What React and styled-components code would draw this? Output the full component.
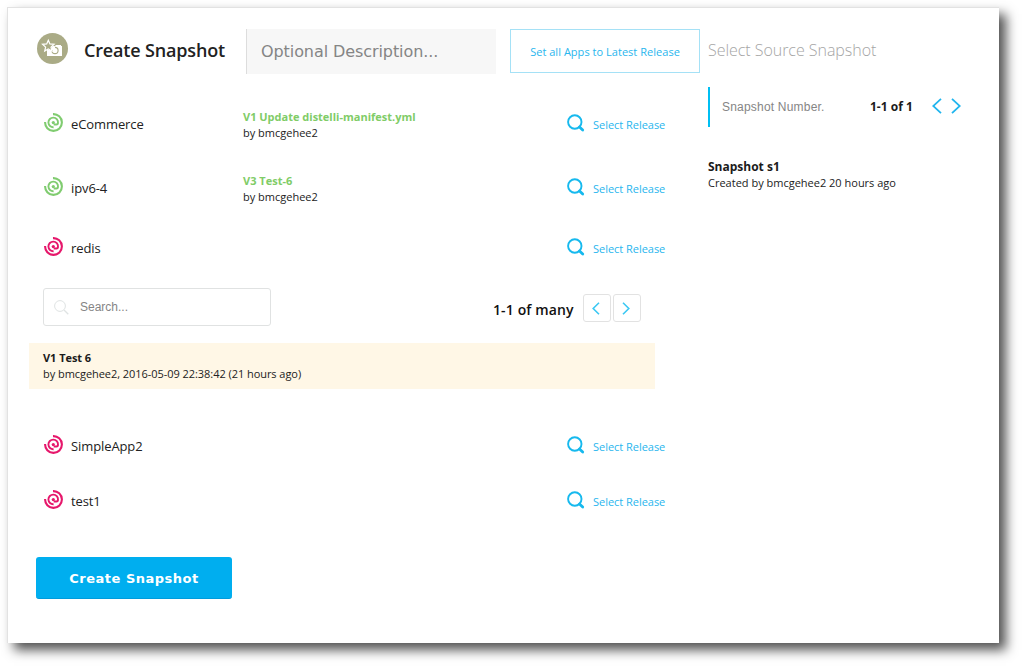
import React from 'react';
import styled, { createGlobalStyle } from 'styled-components';

const GlobalStyle = createGlobalStyle`
  * { box-sizing: border-box; }
  body {
    display: flow-root;
    min-height: 100vh;
    margin: 0;
    background: #fff;
    color: #222;
    font-family: 'Open Sans', 'Noto Sans', sans-serif;
    font-size: 11px;
    overflow: hidden;
  }
  button, input { font: inherit; margin: 0; outline: 0; }
  button { cursor: pointer; padding: 0; }
  svg { display: block; flex: none; }
`;

const Panel = styled.main`
  display: grid;
  grid-template-columns: 700px 1fr;
  width: 992px;
  height: 636px;
  margin: 7px;
  border: solid #e2e2e2;
  border-width: 1px 0 0 1px;
  background: #fff;
  box-shadow: 7px 7px 11px rgba(0, 0, 0, 0.68);
`;

const Main = styled.section`
  padding-top: 21px;
`;

const Header = styled.header`
  display: flex;
  align-items: center;
  height: 44px;
  padding-left: 29px;
`;

const BadgeIcon = styled.svg`
  margin-top: -5px;
`;

const Title = styled.h1`
  width: 162px;
  margin: -3px 0 0 16px;
  font-size: 18px;
  line-height: 26px;
  font-weight: 600;
  letter-spacing: -0.16px;
  white-space: nowrap;
`;

const Description = styled.input`
  width: 250px;
  height: 45px;
  padding: 0 14px;
  border: 0;
  border-left: 1px solid #ddd;
  background: #f7f7f7;
  font-family: 'DejaVu Sans', sans-serif;
  font-size: 16px;
  letter-spacing: -0.08px;
  &::placeholder { color: #858585; opacity: 1; }
`;

const OutlineButton = styled.button`
  width: 190px;
  height: 44px;
  margin-left: 14px;
  border: 1px solid #a5e1f6;
  background: #fff;
  color: #29b6ee;
  font-size: 11px;
  letter-spacing: 0.03px;
`;

const AppList = styled.div`
  padding-top: 19px;
`;

const AppRow = styled.div`
  display: grid;
  grid-template-columns: 27px 172px 324px 1fr;
  align-items: center;
  height: ${(p) => (p.$tall ? 64 : 55)}px;
  padding: 0 0 ${(p) => (p.$tall ? 2 : 1)}px 36px;
`;

const AppName = styled.span`
  padding-top: 2px;
  font-size: 13px;
  line-height: 18px;
  letter-spacing: -0.1px;
`;

const Release = styled.div`
  padding-top: 4px;
  line-height: 16px;
`;

const ReleaseName = styled.div`
  color: #80cc67;
  font-weight: 700;
`;

const SelectLink = styled.a`
  display: flex;
  align-items: center;
  gap: 8px;
  color: #29b6ee;
  line-height: 16px;
  letter-spacing: -0.03px;
`;

const LinkText = styled.span`
  padding-top: 4px;
`;

const Picker = styled.div`
  height: 143px;
  padding: 13px 0 0 21px;
`;

const PickerBar = styled.div`
  display: flex;
  align-items: flex-start;
  height: 55px;
  padding-left: 14px;
`;

const SearchBox = styled.label`
  display: flex;
  align-items: center;
  gap: 11px;
  width: 228px;
  height: 38px;
  padding-left: 10px;
  border: 1px solid #e0e2e2;
  border-radius: 3px;
`;

const PlainInput = styled.input`
  min-width: 0;
  width: ${(p) => p.$width}px;
  padding: 0;
  border: 0;
  background: transparent;
  font-family: 'Liberation Sans', Arial, sans-serif;
  font-size: 12px;
  letter-spacing: ${(p) => p.$spacing || 0}px;
  &::placeholder { color: #858585; opacity: 1; }
`;

const ManyCount = styled.span`
  width: 90px;
  margin: 12px 0 0 222px;
  color: #111;
  font-size: 14px;
  font-weight: 600;
  line-height: 20px;
  letter-spacing: 0.12px;
`;

const PageButton = styled.button`
  display: flex;
  align-items: center;
  justify-content: center;
  width: 28px;
  height: 28px;
  margin: 6px 2px 0 0;
  padding: 0 2px 0 0;
  border: 1px solid #e2e2e2;
  border-radius: 3px;
  background: #fff;
`;

const ReleaseOption = styled.div`
  width: 626px;
  height: 46px;
  padding: 7px 14px;
  background: #fff7e6;
  line-height: 16px;
  letter-spacing: -0.05px;
`;

const Strong = styled.div`
  font-weight: 700;
  color: #1b1b1b;
  font-size: ${(p) => p.$size || 11}px;
`;

const CreateButton = styled.button`
  display: block;
  width: 196px;
  height: 42px;
  margin: 29px 0 0 28px;
  padding-top: 2px;
  border: 0;
  border-bottom: 1px solid #009bdc;
  border-radius: 3px;
  background: #00aeef;
  color: #fff;
  font-family: 'DejaVu Sans', sans-serif;
  font-size: 13px;
  font-weight: 700;
  letter-spacing: 0.5px;
`;

const Side = styled.aside`
  padding-top: 29px;
`;

const SideTitle = styled.h2`
  margin: 0;
  color: #a5a5a5;
  font-size: 16px;
  font-weight: 300;
  line-height: 26px;
  letter-spacing: -0.04px;
`;

const Filter = styled.div`
  display: flex;
  align-items: center;
  height: 40px;
  margin-top: 24px;
  padding-left: 12px;
  border-left: 2px solid #00bff3;
`;

const FilterCount = styled.span`
  width: 62px;
  padding-bottom: 2px;
  color: #1b1b1b;
  font-size: 12px;
  font-weight: 700;
`;

const ArrowButton = styled.button`
  display: flex;
  width: 10px;
  height: 16px;
  margin-right: 9px;
  margin-top: -3px;
  border: 0;
  background: none;
`;

const Snapshot = styled.div`
  margin-top: 32px;
  line-height: 16px;
`;

function SnapshotBadge() {
  return (
    <BadgeIcon width="31" height="31" viewBox="0 0 31 31" fill="none">
      <circle cx="15.5" cy="15.5" r="15.5" fill="#aaab86" />
      <path d="M16 13h2l1-1h5v1h1v10H10v-6h3z" fill="#fff" />
      <circle cx="18" cy="17.5" r="3.1" stroke="#aaab86" strokeWidth="1.1" />
      <path d="M14.5 13.5h3.5v3.5h-3.5z" fill="#fff" />
      <path d="m11.3 7.2 1.6 3.7 4.2.4-3.1 2.8.9 4-3.6-2.1-3.6 2.1.9-4-3.1-2.8 4.2-.4z" fill="#aaab86" stroke="#fff" strokeWidth="1.2" />
    </BadgeIcon>
  );
}

function SpiralIcon({ color }) {
  return (
    <svg width="19" height="20" viewBox="0 0 19 20" fill="none" stroke={color} strokeWidth="2.1">
      <path d="M9 1.1A8.4 8.4 0 1 1 1.1 9" />
      <path d="M9.6 14.2A4.8 4.8 0 1 1 14 9.8c0 1-.7 1.7-1.6 1.7H9.7" strokeWidth="1.9" />
      <circle cx="9.3" cy="9.6" r="1.6" fill={color} stroke="none" />
    </svg>
  );
}

function SearchIcon() {
  return (
    <svg width="18" height="19" viewBox="0 0 18 19" fill="none" stroke="#16b9ee">
      <circle cx="7.8" cy="8" r="6.7" strokeWidth="1.9" />
      <path d="m12.5 13 3.2 3.1" strokeWidth="2.8" strokeLinecap="round" />
    </svg>
  );
}

function Chevron({ right, width, height, weight, color }) {
  return (
    <svg width={width} height={height} viewBox={`0 0 ${width} ${height}`} fill="none" stroke={color} strokeWidth={weight}>
      {right
        ? <path d={`M1 .8 ${width - 1.2} ${height / 2} 1 ${height - 0.8}`} />
        : <path d={`M${width - 1} .8 1.2 ${height / 2} ${width - 1} ${height - 0.8}`} />}
    </svg>
  );
}

function ReleaseRow({ name, release }) {
  return (
    <AppRow $tall={Boolean(release)}>
      <SpiralIcon color={release ? '#80cc70' : '#e6176b'} />
      <AppName>{name}</AppName>
      <Release>
        {release && <><ReleaseName>{release}</ReleaseName>by bmcgehee2</>}
      </Release>
      <SelectLink><SearchIcon /><LinkText>Select Release</LinkText></SelectLink>
    </AppRow>
  );
}

export default function App() {
  return (
    <>
      <GlobalStyle />
      <Panel>
        <Main>
          <Header>
            <SnapshotBadge />
            <Title>Create Snapshot</Title>
            <Description placeholder="Optional Description..." />
            <OutlineButton>Set all Apps to Latest Release</OutlineButton>
          </Header>
          <AppList>
            <ReleaseRow name="eCommerce" release="V1 Update distelli-manifest.yml" />
            <ReleaseRow name="ipv6-4" release="V3 Test-6" />
            <ReleaseRow name="redis" />
            <Picker>
              <PickerBar>
                <SearchBox>
                  <svg width="15" height="15" viewBox="0 0 15 15" fill="none" stroke="#dfe3e3">
                    <circle cx="6" cy="6" r="5.4" />
                    <path d="m10 10 4.3 4.3" strokeWidth="1.3" />
                  </svg>
                  <PlainInput $width={170} placeholder="Search..." />
                </SearchBox>
                <ManyCount>1-1 of many</ManyCount>
                <PageButton><Chevron width={8} height={13} weight={1.6} color="#3bc8f3" /></PageButton>
                <PageButton><Chevron right width={8} height={13} weight={1.6} color="#3bc8f3" /></PageButton>
              </PickerBar>
              <ReleaseOption>
                <Strong>V1 Test 6</Strong>
                by bmcgehee2, 2016-05-09 22:38:42 (21 hours ago)
              </ReleaseOption>
            </Picker>
            <ReleaseRow name="SimpleApp2" />
            <ReleaseRow name="test1" />
          </AppList>
          <CreateButton>Create Snapshot</CreateButton>
        </Main>
        <Side>
          <SideTitle>Select Source Snapshot</SideTitle>
          <Filter>
            <PlainInput $width={148} $spacing={0.2} placeholder="Snapshot Number." />
            <FilterCount>1-1 of 1</FilterCount>
            <ArrowButton><Chevron width={10} height={16} weight={1.8} color="#20b5ee" /></ArrowButton>
            <ArrowButton><Chevron right width={10} height={16} weight={1.8} color="#20b5ee" /></ArrowButton>
          </Filter>
          <Snapshot>
            <Strong $size={12}>Snapshot s1</Strong>
            Created by bmcgehee2 20 hours ago
          </Snapshot>
        </Side>
      </Panel>
    </>
  );
}
